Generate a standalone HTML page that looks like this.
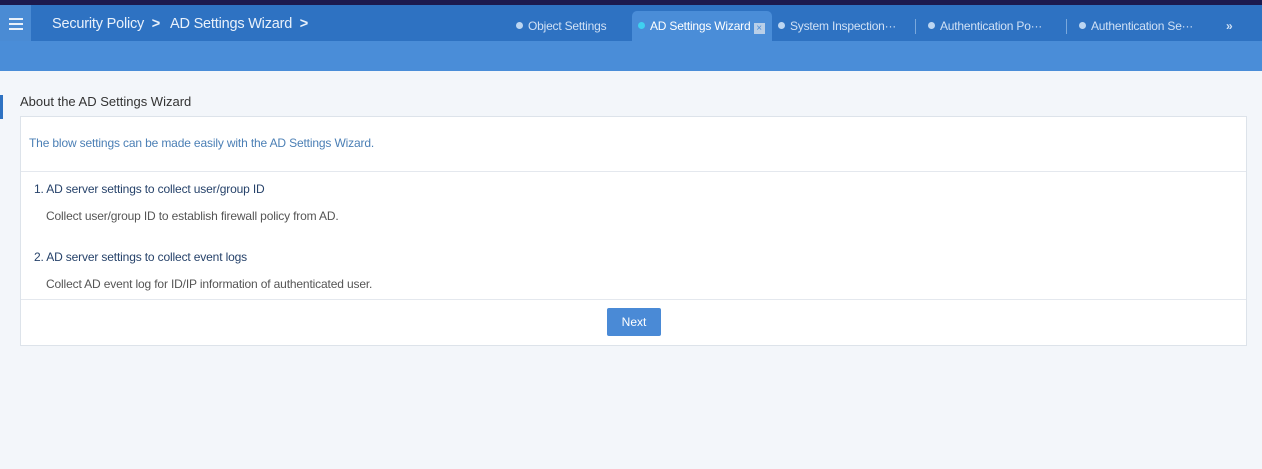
<!DOCTYPE html>
<html><head><style>
*{margin:0;padding:0;box-sizing:border-box}
body{width:1262px;height:469px;overflow:hidden;background:#f3f6fa;font-family:"Liberation Sans",sans-serif;position:relative}
.top{position:absolute;left:0;top:0;width:1262px;height:5px;background:#1c1a4e}
.hdr{position:absolute;left:0;top:5px;width:1262px;height:36px;background:#2e72c2}
.ham{position:absolute;left:0;top:5px;width:31px;height:36px;background:#4a8bd4}
.ham i{position:absolute;left:9px;width:14px;height:2px;background:#e8f0fa}
.sub{position:absolute;left:0;top:41px;width:1262px;height:30px;background:#4a8dd8}
.crumb{position:absolute;top:16px;color:#e9f1fb;font-size:14.5px;letter-spacing:-0.2px}
.tab{position:absolute;top:19px;color:#cfe0f5;font-size:12px;white-space:nowrap;letter-spacing:-0.2px}
.tab b{display:inline-block;width:7px;height:7px;border-radius:50%;background:#bcd6f2;margin-right:5px;vertical-align:1px}
.act{position:absolute;left:632px;top:11px;width:140px;height:32px;background:#4a8dd8;border-radius:5px 5px 0 0}
.sep{position:absolute;top:19px;width:1px;height:15px;background:#7aa8dc}
.title{position:absolute;left:20px;top:94px;font-size:13px;color:#333}
.panel{position:absolute;left:20px;top:116px;width:1227px;height:230px;background:#fff;border:1px solid #dde3ea}
.line{position:absolute;left:0;width:100%;height:1px;background:#e4e8ee}
.t{position:absolute;font-size:12px;white-space:nowrap;letter-spacing:-0.15px}
.btn{position:absolute;left:586px;top:191px;width:54px;height:28px;background:#4a8ad6;color:#fff;font-size:12px;text-align:center;line-height:28px;border-radius:2px}
</style></head><body>
<div class="top"></div>
<div class="hdr"></div>
<div class="ham"><i style="top:13px"></i><i style="top:18px"></i><i style="top:23px"></i></div>
<div class="crumb" style="left:52px">Security Policy &nbsp;<b>&gt;</b></div>
<div class="crumb" style="left:170px">AD Settings Wizard &nbsp;<b>&gt;</b></div>
<div class="sub"></div>
<div class="act"></div>
<div class="tab" style="left:516px"><b></b>Object Settings</div>
<div class="tab" style="left:638px;color:#fff"><b style="background:#3fd0f0"></b>AD Settings Wizard <span style="display:inline-block;width:11px;height:11px;background:#b9cfe8;color:#4a8dd8;font-size:10px;line-height:11px;text-align:center;vertical-align:-1px">×</span></div>
<div class="tab" style="left:778px"><b></b>System Inspection···</div>
<div class="sep" style="left:915px"></div>
<div class="tab" style="left:928px"><b></b>Authentication Po···</div>
<div class="sep" style="left:1066px"></div>
<div class="tab" style="left:1079px"><b></b>Authentication Se···</div>
<div class="tab" style="left:1226px;font-weight:bold">»</div>
<div style="position:absolute;left:0;top:95px;width:3px;height:24px;background:#2e72c2"></div>
<div class="title">About the AD Settings Wizard</div>
<div class="panel">
<div class="t" style="left:8px;top:19px;color:#4b7fb5">The blow settings can be made easily with the AD Settings Wizard.</div>
<div class="line" style="top:54px"></div>
<div class="t" style="left:13px;top:65px;color:#26426a">1. AD server settings to collect user/group ID</div>
<div class="t" style="left:25px;top:92px;color:#555">Collect user/group ID to establish firewall policy from AD.</div>
<div class="t" style="left:13px;top:133px;color:#26426a">2. AD server settings to collect event logs</div>
<div class="t" style="left:25px;top:160px;color:#555">Collect AD event log for ID/IP information of authenticated user.</div>
<div class="line" style="top:182px"></div>
<div class="btn">Next</div>
</div>
</body></html>
